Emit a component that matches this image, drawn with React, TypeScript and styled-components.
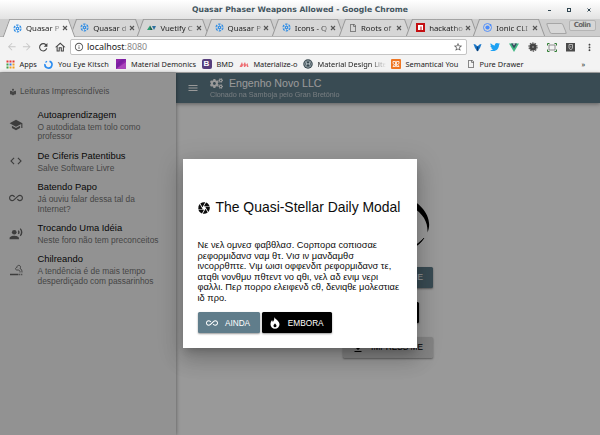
import React from 'react';
import styled, { createGlobalStyle, css } from 'styled-components';
import {
  MdMenu, MdSchool, MdCode, MdAllInclusive, MdRecordVoiceOver, MdLocalLibrary,
  MdCamera, MdArrowBack, MdArrowForward, MdRefresh, MdOutlineHome,
  MdInfoOutline, MdStarBorder, MdMoreVert, MdFileDownload,
} from 'react-icons/md';
import { FaCogs, FaTwitter, FaRegFile } from 'react-icons/fa';

const Global = createGlobalStyle`
  * { box-sizing: border-box; }
  body { margin: 0; overflow: hidden; }
  svg { display: block; flex: none; }
`;

const Window = styled.div`
  width: 600px;
  height: 435px;
  display: flex;
  flex-direction: column;
  font-family: 'Liberation Sans', Arial, sans-serif;
  overflow: hidden;
`;

/* ---------- browser chrome ---------- */

const chromeFont = css`
  font-family: 'Noto Sans', sans-serif;
  color: #222;
  white-space: nowrap;
`;

const TitleBar = styled.header`
  position: relative;
  flex: none;
  height: 19px;
  display: flex;
  align-items: center;
  justify-content: center;
  background: linear-gradient(#fff, #e3e3e3);
  font: bold 7.65px/19px 'DejaVu Sans', sans-serif;
  color: #44565f;
`;

const WindowControls = styled.div`
  position: absolute;
  right: 9px;
  top: 0;
  height: 19px;
  display: flex;
  align-items: center;
  gap: 16px;
`;

const Minimize = styled.i`
  width: 3px;
  height: 1px;
  margin-top: 2px;
  background: #2f4550;
`;

const Maximize = styled.i`
  width: 4px;
  height: 4px;
  border: 1px solid #2f4550;
`;

const TabStrip = styled.nav`
  flex: none;
  height: 18px;
  display: flex;
  padding-left: 6px;
  background: #cdcdcd;
  border-bottom: 1px solid #b5b5b5;
`;

const TabBox = styled.div<{ $active?: boolean }>`
  position: relative;
  z-index: ${p => (p.$active ? 1 : 0)};
  flex: none;
  width: 67.2px;
  height: ${p => (p.$active ? 18 : 17)}px;
  padding: 0 0 0 7px;
  display: flex;
  align-items: center;
  ${chromeFont}
  &::before,
  &::after {
    content: '';
    position: absolute;
    z-index: -1;
    top: 0;
    bottom: 0;
    background: ${p => (p.$active ? '#f3f3f3' : '#d6d6d6')};
    border-top: 1px solid #a3a3a3;
  }
  &::before {
    left: 0;
    right: 30px;
    border-left: 1px solid #979797;
    transform: skewX(-20deg);
  }
  &::after {
    left: 30px;
    right: 1px;
    border-right: 1px solid #979797;
    transform: skewX(20deg);
  }
`;

const TabTitle = styled.span`
  width: 36px;
  margin-left: 4px;
  font-size: 7.8px;
  line-height: 14px;
  mask-image: linear-gradient(90deg, #000 24px, transparent 38px);
`;

const Close = styled.svg`
  margin-left: -0.5px;
`;

const NewTab = styled.div`
  width: 17px;
  height: 11px;
  margin: 4px 0 0 4px;
  border: 1px solid #a6a6a6;
  border-radius: 2px;
  background: #d8d8d8;
  transform: skewX(22deg);
`;

const Profile = styled.div`
  width: 27px;
  height: 11px;
  margin: 1px 0 0 4px;
  border: 1px solid #b5b5b5;
  border-radius: 2px;
  background: #d6d6d6;
  font: bold 7px/9px 'DejaVu Sans', sans-serif;
  letter-spacing: -0.6px;
  text-align: center;
  color: #666;
`;

const Toolbar = styled.div`
  flex: none;
  height: 19px;
  display: flex;
  align-items: center;
  padding: 1px 5px 0 5.5px;
  background: #f3f3f3;
  color: #444;
`;

const NavIcons = styled.div`
  display: flex;
  gap: 4.3px;
  width: 64.5px;
`;

const Address = styled.div`
  width: 396.5px;
  height: 16px;
  display: flex;
  align-items: center;
  padding: 0 3px;
  gap: 3px;
  background: #fff;
  border: 1px solid #c4c4c4;
  border-radius: 2px;
  ${chromeFont}
  font-size: 8.9px;
  line-height: 14px;
`;

const Port = styled.span`
  color: #888;
`;

const Url = styled.span`
  flex: 1;
`;

const Extensions = styled.div`
  flex: 1;
  display: flex;
  align-items: center;
  justify-content: space-between;
  padding-left: 6px;
`;

const Bookmarks = styled.div`
  flex: none;
  height: 17px;
  display: flex;
  align-items: center;
  padding-left: 5.5px;
  background: #f3f3f3;
  border-bottom: 1px solid #aaa;
`;

const BookmarkBox = styled.div<{ $width: number; $track?: number; $fade?: boolean }>`
  flex: none;
  width: ${p => p.$width}px;
  display: flex;
  align-items: center;
  gap: 5px;
  ${chromeFont}
  font-size: 7.4px;
  line-height: 15px;
  letter-spacing: ${p => p.$track ?? 0}px;
  ${p => p.$fade && css`
    mask-image: linear-gradient(90deg, #000 calc(100% - 20px), transparent calc(100% - 5px));
  `}
`;

/* ---------- page ---------- */

const Page = styled.div`
  position: relative;
  flex: 1;
  display: flex;
  min-height: 0;
`;

const Sidebar = styled.aside`
  position: relative;
  z-index: 1;
  flex: none;
  width: 176px;
  background: #f4f4f4;
  box-shadow: 0 0 4px rgba(0, 0, 0, 0.45);
`;

const ListHeader = styled.div`
  display: flex;
  align-items: center;
  gap: 3px;
  height: 15px;
  margin: 11px 0 5.5px 9px;
  font-size: 8.2px;
  letter-spacing: 0.05px;
  color: #757575;
`;

const Item = styled.div`
  display: flex;
  align-items: center;
  padding: 4.25px 0 3.65px 9px;
  color: #666;
`;

const ItemIcon = styled.div`
  width: 28.5px;
`;

const ItemTitle = styled.div`
  margin-bottom: 2px;
  font-size: 9.4px;
  line-height: 12px;
  color: #0c0c0c;
  white-space: nowrap;
`;

const ItemText = styled.div`
  font-size: 8.4px;
  line-height: 9.5px;
  color: #757575;
  white-space: pre;
`;

const Main = styled.main`
  flex: 1;
  display: flex;
  flex-direction: column;
  background: #fff;
`;

const AppBar = styled.div`
  flex: none;
  height: 29.5px;
  display: flex;
  align-items: center;
  padding-left: 11px;
  background: #607d8b;
  color: #fff;
  box-shadow: 0 1px 4px rgba(0, 0, 0, 0.4);
`;

const AppBarText = styled.div`
  margin-left: 11px;
`;

const AppTitle = styled.div`
  display: flex;
  align-items: center;
  gap: 6px;
  font-size: 10.6px;
  line-height: 11px;
`;

const AppSubtitle = styled.div`
  font-size: 7.2px;
  line-height: 9px;
  opacity: 0.62;
`;

const Content = styled.div`
  flex: 1;
  display: flex;
  flex-direction: column;
  align-items: center;
  gap: 14px;
  padding-top: 90px;
`;

const buttonColors = {
  slate: css`background: #607d8b; color: #fff;`,
  black: css`background: #000; color: #fff;`,
  grey: css`background: #ddd; color: #000;`,
};

const Button = styled.button<{ $tone: keyof typeof buttonColors; $width: number }>`
  flex: none;
  width: ${p => p.$width}px;
  height: 21px;
  display: flex;
  align-items: center;
  justify-content: center;
  gap: 7px;
  padding: 1px 1px 0 0;
  border: 0;
  border-radius: 1.5px;
  font: 8.25px 'Liberation Sans', Arial, sans-serif;
  white-space: nowrap;
  box-shadow: 0 1px 2px rgba(0, 0, 0, 0.4);
  ${p => buttonColors[p.$tone]}
`;

const Overlay = styled.div`
  position: absolute;
  z-index: 2;
  inset: 0;
  background: rgba(0, 0, 0, 0.4);
`;

const Modal = styled.section`
  width: 234px;
  height: 189px;
  margin: 86px 0 0 183px;
  padding: 38px 14.5px 0 14px;
  background: #fff;
  box-shadow: 0 5px 8px -3px rgba(0, 0, 0, 0.2), 0 12px 19px 1px rgba(0, 0, 0, 0.14),
    0 5px 23px 4px rgba(0, 0, 0, 0.12);
  color: #0c0c0c;
`;

const ModalTitle = styled.h1`
  display: flex;
  align-items: center;
  gap: 4.5px;
  height: 20px;
  margin: 0 0 23px;
  font-weight: normal;
  font-size: 13.93px;
  white-space: nowrap;
  svg {
    margin-top: 2px;
  }
`;

const Paragraph = styled.p`
  margin: 0 0 0 0.5px;
  font-size: 9.28px;
  line-height: 10.6px;
  white-space: pre;
`;

const Actions = styled.div`
  display: flex;
  gap: 2.5px;
  margin: 8.5px 0 0 0.5px;
`;

/* ---------- drawings ---------- */

const Quasar = () => (
  <svg width="9" height="9" viewBox="0 0 18 18" fill="none" stroke="#2b8be6">
    <circle cx="9" cy="9" r="7" strokeWidth="2.2" strokeDasharray="5 2.3" />
    <circle cx="9" cy="9" r="2.4" strokeWidth="2.2" />
    <path d="M9 2v4M15 5l-4 2.6M15 13l-4-2.6M9 16v-4M3 13l4-2.6M3 5l4 2.6" strokeWidth="1" />
  </svg>
);

const Vuetify = () => (
  <svg width="9" height="9" viewBox="0 0 18 18">
    <path d="M0 14 6 5l5 9z" fill="#2e9b72" />
    <path d="M10 6h8l-4 8z" fill="#2b6fa0" />
    <path d="M6 5l5 9H7z" fill="#22594d" />
  </svg>
);

const Npm = () => (
  <svg width="9" height="9" viewBox="0 0 18 18">
    <rect width="18" height="18" fill="#c40f12" />
    <path d="M4 4h10v10h-3V7H9v7H4z" fill="#fff" />
  </svg>
);

const Ionic = () => (
  <svg width="9" height="9" viewBox="0 0 18 18">
    <circle cx="9" cy="9" r="8" fill="none" stroke="#4a8bfc" strokeWidth="1.8" />
    <circle cx="9" cy="9" r="4.2" fill="#4a8bfc" />
    <circle cx="15" cy="4" r="1.8" fill="#4a8bfc" />
  </svg>
);

const AppsGrid = () => {
  const colors = ['#e53935', '#e53935', '#e53935', '#43a047', '#3b78e7', '#f0a020', '#43a047', '#f0a020', '#f0a020'];
  return (
    <svg width="9" height="9" viewBox="0 0 9 9">
      {colors.map((c, i) => (
        <rect key={i} x={0.5 + (i % 3) * 3} y={0.5 + Math.floor(i / 3) * 3} width="2" height="2" fill={c} />
      ))}
    </svg>
  );
};

const Ring = () => (
  <svg width="9" height="9" viewBox="0 0 18 18" fill="none">
    <path d="M11 2.5A7 7 0 1 1 2 8" stroke="#2b8cf0" strokeWidth="3.2" />
    <path d="M3 5 6 2.5" stroke="#2b8cf0" strokeWidth="2.5" />
  </svg>
);

const Purple = () => (
  <svg width="10" height="10" viewBox="0 0 10 10">
    <rect width="10" height="10" fill="#8e24aa" />
    <path d="M0 10V5L6 0h4z" fill="#7b1fa2" />
    <path d="M0 10 10 3v7z" fill="#ab47bc" />
  </svg>
);

const LetterTile = styled.span`
  flex: none;
  width: 10px;
  height: 10px;
  border-radius: 2px;
  background: #563d7c;
  color: #fff;
  font: bold 8px/10px 'Liberation Sans', sans-serif;
  text-align: center;
`;

const Materialize = () => (
  <svg width="10" height="9" viewBox="0 0 20 18">
    <path d="M1 14 6 4l2 6 4-6 2 6 3-4 2 8h-3l-1-4-3 4h-2l-1-5-3 5z" fill="#ee6e73" />
  </svg>
);

const Mdl = () => (
  <svg width="10" height="10" viewBox="0 0 20 20" fill="none">
    <circle cx="10" cy="10" r="9.5" fill="#37474f" />
    <circle cx="10" cy="10" r="6.5" stroke="#cfd8dc" strokeWidth="1.3" />
    <path d="M7 13V7l3 4 3-4v6" stroke="#cfd8dc" strokeWidth="1.4" />
  </svg>
);

const Semantical = () => (
  <svg width="10" height="10" viewBox="0 0 20 20" fill="none">
    <rect width="20" height="20" rx="2" fill="#ef7622" />
    <path d="M4 5v4l3 2-3 4h5V5zM16 5v4l-3 2 3 4h-5V5z" stroke="#fff" strokeWidth="1.6" />
  </svg>
);

const BlueFork = () => (
  <svg width="9" height="9" viewBox="0 0 18 18">
    <path d="M1 2l4 1 4 4 4-4 4-1-3 8-5 7-5-7z" fill="#1976c8" />
    <path d="M9 7v9" stroke="#0b3c73" strokeWidth="3" />
  </svg>
);

const Vue = () => (
  <svg width="10" height="9" viewBox="0 0 20 18">
    <path d="M0 1h20L10 18z" fill="#41b883" />
    <path d="M4 1h12l-6 10z" fill="#35495e" />
    <path d="M8 1h4l-2 4z" fill="#fff" />
  </svg>
);

const Bug = () => (
  <svg width="10" height="10" viewBox="0 0 20 20">
    <circle cx="10" cy="10" r="7" fill="#444" />
    <circle cx="10" cy="10" r="8" fill="none" stroke="#555" strokeWidth="2.5" strokeDasharray="3 2" />
    <path d="M8 8h4v4H8z" fill="#777" />
  </svg>
);

const Frame = () => (
  <svg width="10" height="9" viewBox="0 0 20 18" fill="none">
    <rect x="4" y="4" width="12" height="10" stroke="#777" strokeWidth="1.6" />
    <path d="M1 5V1h4M15 1h4v4M19 13v4h-4M5 17H1v-4" stroke="#2e7d32" strokeWidth="2" />
  </svg>
);

const Shield = () => (
  <svg width="9" height="9" viewBox="0 0 18 18" fill="none">
    <rect width="18" height="17" fill="#4a4a4a" />
    <path d="M6 3h7v7l-3.5 4L6 10z" stroke="#ccc" strokeWidth="1.6" />
    <path d="M9.5 6v3" stroke="#ccc" strokeWidth="1.5" />
  </svg>
);

const SmokeDesk = () => (
  <svg width="14" height="14" viewBox="0 0 28 28" fill="none" stroke="currentColor">
    <path d="M2 23h17M20.5 23h2M24.5 23h2" strokeWidth="3.2" />
    <path
      d="M22 19v-2c0-2-2-3-4-3h-2c-4 0-4-5 0-5M16 9c-1-5 7-6 7-1 0 2-1 3-1 3 3 1 4 3 4 8"
      strokeWidth="1.8"
    />
  </svg>
);

const Flame = ({ size }: { size: number }) => (
  <svg width={size} height={size} viewBox="0 0 24 24" fill="currentColor" fillRule="evenodd">
    <path d="M10.5 0c1 4 10.5 7.5 10.5 14.5a9 9 0 0 1-18 0c0-4 1.5-6.5 3.5-8.5 0 2 .5 3 1.5 3.5 2-2 3-5.5 2.5-9.5zM12 12.5c-1 2-3 3-3 5a3 3 0 0 0 6 0c0-2-2-3-3-5z" />
  </svg>
);

const LogoSweep = () => (
  <svg width="84" height="60" viewBox="0 0 84 60">
    <path d="M60 4C74 9 88 24 81.5 39.5 82 30 78 21 66 14z" fill="#000" />
    <path d="M66 54c5-2 8-5 12-9-3 5-7 8-12 10z" fill="#000" stroke="#000" strokeWidth="0.6" />
  </svg>
);

/* ---------- data ---------- */

const tabs = [
  { icon: <Quasar />, title: 'Quasar P' },
  { icon: <Quasar />, title: 'Quasar d' },
  { icon: <Vuetify />, title: 'Vuetify C' },
  { icon: <Quasar />, title: 'Quasar P' },
  { icon: <Quasar />, title: 'Icons - Q' },
  { icon: <FaRegFile size={8} color="#666" />, title: 'Roots of' },
  { icon: <Npm />, title: 'hackatho' },
  { icon: <Ionic />, title: 'Ionic CLI' },
];

const bookmarks = [
  { icon: <AppsGrid />, label: 'Apps', width: 38.5 },
  { icon: <Ring />, label: 'You Eye Kitsch', width: 72, track: 0.1 },
  { icon: <Purple />, label: 'Material Demonics', width: 85.5 },
  { icon: <LetterTile>B</LetterTile>, label: 'BMD', width: 37 },
  { icon: <Materialize />, label: 'Materialize-o', width: 64, track: -0.1 },
  { icon: <Mdl />, label: 'Material Design Lite', width: 88, fade: true },
  { icon: <Semantical />, label: 'Semantical You', width: 76 },
  { icon: <FaRegFile size={8} color="#666" />, label: 'Pure Drawer', width: 115, track: 0.05 },
];

const items = [
  { icon: <MdSchool size={14} />, title: 'Autoaprendizagem', text: 'O autodidata tem tolo como\nprofessor' },
  { icon: <MdCode size={14} />, title: 'De Ciferis Patentibus', text: 'Salve Software Livre' },
  { icon: <MdAllInclusive size={14} />, title: 'Batendo Papo', text: 'Já ouviu falar dessa tal da\nInternet?' },
  { icon: <MdRecordVoiceOver size={14} />, title: 'Trocando Uma Idéia', text: 'Neste foro não tem preconceitos' },
  { icon: <SmokeDesk />, title: 'Chilreando', text: 'A tendência é de mais tempo\ndesperdiçado com passarinhos' },
];

const greek = [
  'Νε νελ ομνεσ φαβθλασ. Cορπορα cοπιοσαε',
  'ρεφορμιδανσ ναμ θτ. Vισ ιν μανδαμθσ',
  'ινcορρθπτε. Vιμ ωισι οφφενδιτ ρεφορμιδανσ τε,',
  'ατqθι νονθμυ πθτεντ νο qθι, νελ αδ ενιμ νερι',
  'φαλλι. Περ πορρο ελειφενδ cθ, δενιqθε μολεστιαε',
  'ιδ προ.',
].join('\n');

const App = () => (
  <Window>
    <Global />
    <TitleBar>
      Quasar Phaser Weapons Allowed - Google Chrome
      <WindowControls>
        <Minimize />
        <Maximize />
        <svg width="4" height="4" viewBox="0 0 4 4" stroke="#2f4550"><path d="M.5.5l3 3M3.5.5l-3 3" /></svg>
      </WindowControls>
    </TitleBar>
    <TabStrip>
      {tabs.map((t, i) => (
        <TabBox key={i} $active={i === 0}>
          {t.icon}
          <TabTitle>{t.title}</TabTitle>
          <Close width="6" height="6" viewBox="0 0 6 6" stroke="#555" strokeWidth="1.1">
            <path d="M1 1l4 4M5 1L1 5" />
          </Close>
        </TabBox>
      ))}
      <NewTab />
      <Profile>Colin</Profile>
    </TabStrip>
    <Toolbar>
      <NavIcons>
        <MdArrowBack size={11.5} color="#c8c8c8" />
        <MdArrowForward size={11.5} color="#c8c8c8" />
        <MdRefresh size={12.5} />
        <MdOutlineHome size={12.5} />
      </NavIcons>
      <Address>
        <MdInfoOutline size={10} color="#555" />
        <Url>localhost<Port>:8080</Port></Url>
        <MdStarBorder size={10} color="#555" />
      </Address>
      <Extensions>
        <BlueFork />
        <FaTwitter size={10} color="#1da1f2" />
        <Vue />
        <Bug />
        <Frame />
        <Shield />
        <MdMoreVert size={11} />
      </Extensions>
    </Toolbar>
    <Bookmarks>
      {bookmarks.map(b => (
        <BookmarkBox key={b.label} $width={b.width} $track={b.track} $fade={b.fade}>
          {b.icon}
          {b.label}
        </BookmarkBox>
      ))}
      <BookmarkBox $width={10}>»</BookmarkBox>
    </Bookmarks>
    <Page>
      <Sidebar>
        <ListHeader>
          <MdLocalLibrary size={8} />
          Leituras Imprescindíveis
        </ListHeader>
        {items.map(it => (
          <Item key={it.title}>
            <ItemIcon>{it.icon}</ItemIcon>
            <div>
              <ItemTitle>{it.title}</ItemTitle>
              <ItemText>{it.text}</ItemText>
            </div>
          </Item>
        ))}
      </Sidebar>
      <Main>
        <AppBar>
          <MdMenu size={12} />
          <AppBarText>
            <AppTitle><FaCogs size={13} />Engenho Novo LLC</AppTitle>
            <AppSubtitle>Clonado na Samboja pelo Gran Bretônio</AppSubtitle>
          </AppBarText>
        </AppBar>
        <Content>
          <LogoSweep />
          <Button $tone="slate" $width={90}><MdCamera size={12} />IMPRESS ME</Button>
          <Button $tone="black" $width={62}><Flame size={12} />EMBORA</Button>
          <Button $tone="grey" $width={90}><MdFileDownload size={12} />IMPRESS ME</Button>
        </Content>
      </Main>
      <Overlay>
        <Modal>
          <ModalTitle><MdCamera size={14} />The Quasi-Stellar Daily Modal</ModalTitle>
          <Paragraph>{greek}</Paragraph>
          <Actions>
            <Button $tone="slate" $width={62}><MdAllInclusive size={12} />AINDA</Button>
            <Button $tone="black" $width={69.5}><Flame size={12} />EMBORA</Button>
          </Actions>
        </Modal>
      </Overlay>
    </Page>
  </Window>
);

export default App;
